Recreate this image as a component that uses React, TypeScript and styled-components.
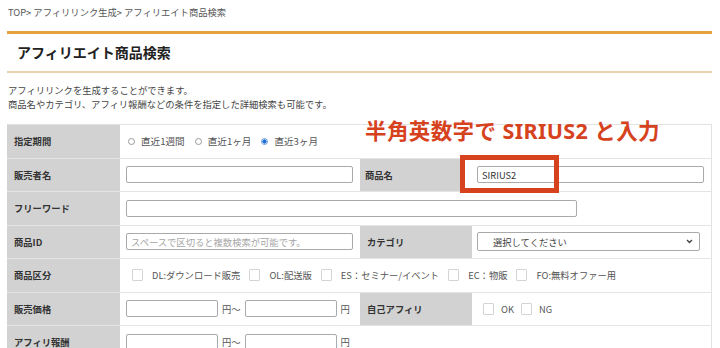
import React, { FC } from "react";
import styled, { createGlobalStyle } from "styled-components";

const GlobalStyle = createGlobalStyle`
  body {
    margin: 0;
    background: #fff;
    font-family: "Noto Sans CJK JP", "Noto Sans", sans-serif;
    color: #333;
  }
`;

const Page = styled.div`
  width: 705px;
  padding-left: 7px;
`;

const Breadcrumb = styled.div`
  padding: 6px 0 0 1px;
  font-size: 9.3px;
  line-height: 12px;
  color: #555;
`;

const TitleBar = styled.h1`
  margin: 13px 0 0;
  height: 37px;
  border-top: 3px solid #e6a23c;
  border-bottom: 2px solid #e6d3ad;
  padding-left: 10px;
  font-size: 14px;
  font-weight: 700;
  line-height: 37px;
  color: #222;
`;

const Description = styled.p`
  margin: 10px 0 0 1px;
  font-size: 9.3px;
  line-height: 14px;
  color: #444;
`;

const FormArea = styled.div`
  position: relative;
  margin-top: 13px;
`;

const Table = styled.div`
  border-top: 1px solid #e2e2e2;
  border-right: 1px solid #e2e2e2;
`;

const Row = styled.div<{ $cols: string; $h?: number }>`
  display: grid;
  grid-template-columns: ${(p) => p.$cols};
  height: ${(p) => p.$h ?? 33.5}px;
  border-bottom: 1px solid #e4e4e4;
  box-sizing: border-box;
`;

const Label = styled.div<{ $pad?: number }>`
  display: flex;
  align-items: center;
  background: #d2d2d2;
  padding-left: ${(p) => p.$pad ?? 7}px;
  font-size: 9.3px;
  font-weight: 700;
  color: #333;
`;

const Cell = styled.div<{ $pad?: number }>`
  display: flex;
  align-items: center;
  padding-left: ${(p) => p.$pad ?? 6}px;
  font-size: 9.3px;
  color: #555;
  background: #fff;
`;

const TextInput = styled.input<{ $w: number }>`
  width: ${(p) => p.$w}px;
  height: 17px;
  box-sizing: border-box;
  border: 1px solid #aaa;
  border-radius: 2px;
  padding: 0 4px;
  font-family: inherit;
  font-size: 9.3px;
  color: #333;
  outline: none;
  &::placeholder {
    color: #a5a5a5;
  }
`;

const Select = styled.div`
  position: relative;
  width: 223px;
  height: 19px;
  box-sizing: border-box;
  border: 1px solid #aaa;
  border-radius: 2px;
  padding-left: 15px;
  display: flex;
  align-items: center;
  font-size: 9.3px;
  color: #444;
`;

const Chevron = styled.svg`
  position: absolute;
  right: 6px;
  top: 6px;
`;

const RadioGroup = styled.div`
  display: flex;
  align-items: center;
  gap: 10px;
`;

const RadioItem = styled.label`
  display: flex;
  align-items: center;
  gap: 6px;
  font-size: 9.6px;
  color: #555;
`;

const RadioDot = styled.span<{ $on?: boolean }>`
  width: 7px;
  height: 7px;
  border-radius: 50%;
  box-sizing: border-box;
  border: 1px solid ${(p) => (p.$on ? "#6ea0e0" : "#999")};
  background: ${(p) => (p.$on ? "radial-gradient(circle, #1f6fd6 0 55%, #cfe0f6 60%)" : "#fff")};
`;

const CheckGroup = styled.div`
  display: flex;
  align-items: center;
`;

const CheckItem = styled.label<{ $gap?: number }>`
  display: flex;
  align-items: center;
  gap: ${(p) => p.$gap ?? 9}px;
  margin-right: ${(p) => p.$gap ?? 9}px;
  color: #555;
`;

const Box = styled.span`
  width: 11px;
  height: 12px;
  box-sizing: border-box;
  border: 1px solid #d4d4d4;
  border-radius: 1px;
  background: #fff;
`;

const Unit = styled.span`
  margin: 0 4px;
  color: #555;
`;

const Note = styled.div`
  position: absolute;
  left: 358px;
  top: -8px;
  font-family: "Noto Sans", "Noto Sans CJK JP", sans-serif;
  font-size: 21.5px;
  font-weight: 700;
  line-height: 30px;
  color: #d6421e;
  letter-spacing: 0.4px;
`;

const Highlight = styled.div`
  position: absolute;
  left: 453px;
  top: 31px;
  width: 99px;
  height: 38px;
  box-sizing: border-box;
  border: 5px solid #d6421e;
`;

const Radio: FC<{ label: string; on?: boolean }> = ({ label, on }) => (
  <RadioItem>
    <RadioDot $on={on} />
    {label}
  </RadioItem>
);

const Check: FC<{ label: string; gap?: number }> = ({ label, gap }) => (
  <CheckItem $gap={gap}>
    <Box />
    {label}
  </CheckItem>
);

const App: FC = () => {
  return (
    <>
      <GlobalStyle />
      <Page>
        <Breadcrumb>TOP&gt; アフィリリンク生成&gt; アフィリエイト商品検索</Breadcrumb>
        <TitleBar>アフィリエイト商品検索</TitleBar>
        <Description>
          アフィリリンクを生成することができます。
          <br />
          商品名やカテゴリ、アフィリ報酬などの条件を指定した詳細検索も可能です。
        </Description>

        <FormArea>
          <Table>
            <Row $cols="113px 1fr">
              <Label>指定期間</Label>
              <Cell $pad={8}>
                <RadioGroup>
                  <Radio label="直近1週間" />
                  <Radio label="直近1ヶ月" />
                  <Radio label="直近3ヶ月" on />
                </RadioGroup>
              </Cell>
            </Row>
            <Row $cols="113px 240px 100px 1fr">
              <Label>販売者名</Label>
              <Cell>
                <TextInput $w={227} />
              </Cell>
              <Label $pad={5}>商品名</Label>
              <Cell $pad={17}>
                <TextInput $w={227} defaultValue="SIRIUS2" />
              </Cell>
            </Row>
            <Row $cols="113px 1fr">
              <Label>フリーワード</Label>
              <Cell>
                <TextInput $w={451} />
              </Cell>
            </Row>
            <Row $cols="113px 240px 112px 1fr">
              <Label>商品ID</Label>
              <Cell>
                <TextInput $w={227} placeholder="スペースで区切ると複数検索が可能です。" />
              </Cell>
              <Label>カテゴリ</Label>
              <Cell $pad={5}>
                <Select>
                  選択してください
                  <Chevron width="7" height="5" viewBox="0 0 7 5">
                    <path d="M1 1l2.5 2.5L6 1" fill="none" stroke="#444" strokeWidth="1.4" />
                  </Chevron>
                </Select>
              </Cell>
            </Row>
            <Row $cols="113px 1fr">
              <Label>商品区分</Label>
              <Cell $pad={12}>
                <CheckGroup>
                  <Check label="DL:ダウンロード販売" />
                  <Check label="OL:配送版" />
                  <Check label="ES：セミナー/イベント" />
                  <Check label="EC：物販" />
                  <Check label="FO:無料オファー用" />
                </CheckGroup>
              </Cell>
            </Row>
            <Row $cols="113px 240px 112px 1fr">
              <Label>販売価格</Label>
              <Cell>
                <TextInput $w={92} />
                <Unit>円～</Unit>
                <TextInput $w={92} />
                <Unit>円</Unit>
              </Cell>
              <Label>自己アフィリ</Label>
              <Cell $pad={11}>
                <CheckGroup>
                  <Check label="OK" gap={7} />
                  <Check label="NG" gap={7} />
                </CheckGroup>
              </Cell>
            </Row>
            <Row $cols="113px 1fr">
              <Label>アフィリ報酬</Label>
              <Cell>
                <TextInput $w={92} />
                <Unit>円～</Unit>
                <TextInput $w={92} />
                <Unit>円</Unit>
              </Cell>
            </Row>
          </Table>
          <Note>半角英数字で SIRIUS2 と入力</Note>
          <Highlight />
        </FormArea>
      </Page>
    </>
  );
};

export default App;
